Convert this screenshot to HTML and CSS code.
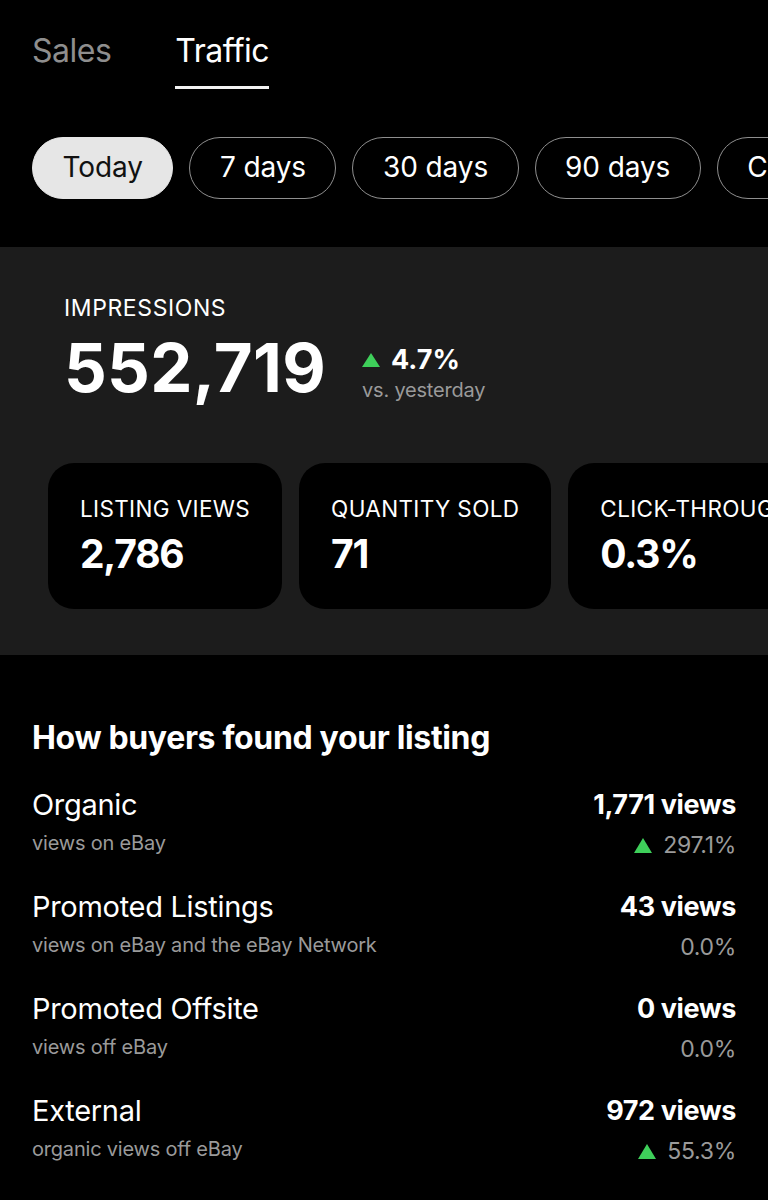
FILE: index.html
```html
<!DOCTYPE html>
<html lang="en">
<head>
<meta charset="utf-8">
<title>Traffic</title>
<link rel="stylesheet" href="styles.css">
</head>
<body>
<nav class="tabs">
  <div class="tab">Sales</div>
  <div class="tab tab-active">Traffic</div>
</nav>

<div class="pills">
  <div class="pill pill-active">Today</div>
  <div class="pill">7 days</div>
  <div class="pill">30 days</div>
  <div class="pill">90 days</div>
  <div class="pill">Custom</div>
</div>

<section class="summary">
  <div class="impressions">
    <div class="label">IMPRESSIONS</div>
    <div class="imp-row">
      <div class="big">552,719</div>
      <div class="delta">
        <div class="delta-top"><span class="tri"></span><span class="delta-val">4.7%</span></div>
        <div class="delta-sub">vs. yesterday</div>
      </div>
    </div>
  </div>
  <div class="cards">
    <div class="card">
      <div class="card-label">LISTING VIEWS</div>
      <div class="card-value">2,786</div>
    </div>
    <div class="card">
      <div class="card-label">QUANTITY SOLD</div>
      <div class="card-value">71</div>
    </div>
    <div class="card">
      <div class="card-label">CLICK-THROUGH RATE</div>
      <div class="card-value">0.3%</div>
    </div>
  </div>
</section>

<section class="sources">
  <h2 class="heading">How buyers found your listing</h2>
  <div class="row">
    <div class="row-left">
      <div class="row-title">Organic</div>
      <div class="row-sub">views on eBay</div>
    </div>
    <div class="row-right">
      <div class="row-value">1,771 views</div>
      <div class="row-pct"><span class="tri tri-sm"></span>297.1%</div>
    </div>
  </div>
  <div class="row">
    <div class="row-left">
      <div class="row-title">Promoted Listings</div>
      <div class="row-sub">views on eBay and the eBay Network</div>
    </div>
    <div class="row-right">
      <div class="row-value">43 views</div>
      <div class="row-pct">0.0%</div>
    </div>
  </div>
  <div class="row">
    <div class="row-left">
      <div class="row-title">Promoted Offsite</div>
      <div class="row-sub">views off eBay</div>
    </div>
    <div class="row-right">
      <div class="row-value">0 views</div>
      <div class="row-pct">0.0%</div>
    </div>
  </div>
  <div class="row">
    <div class="row-left">
      <div class="row-title">External</div>
      <div class="row-sub">organic views off eBay</div>
    </div>
    <div class="row-right">
      <div class="row-value">972 views</div>
      <div class="row-pct"><span class="tri tri-sm"></span>55.3%</div>
    </div>
  </div>
</section>
</body>
</html>
```

FILE: styles.css
```css
* { box-sizing: border-box; }
html, body {
  margin: 0;
  padding: 0;
  background: #000;
  color: #fff;
  font-family: Inter, "Liberation Sans", sans-serif;
  width: 768px;
  height: 1200px;
  overflow: hidden;
}

.tabs {
  display: flex;
  gap: 64px;
  padding: 32px 32px 0;
}
.tab {
  font-size: 32px;
  line-height: 38px;
  color: #8e8e8e;
  padding-bottom: 16px;
  border-bottom: 3px solid transparent;
  letter-spacing: -0.5px;
}
.tab-active {
  color: #fff;
  border-bottom-color: #f2f2f2;
}

.pills {
  display: flex;
  gap: 16px;
  padding: 0 32px;
  margin-top: 48px;
  overflow: hidden;
  white-space: nowrap;
}
.pill {
  flex: none;
  height: 62px;
  padding: 0 29.5px;
  border: 1.5px solid #8f8f8f;
  border-radius: 31px;
  font-size: 28px;
  line-height: 59px;
  color: #fff;
  letter-spacing: -0.1px;
}
.pill-active {
  background: #e6e6e6;
  border-color: #e6e6e6;
  color: #111;
}

.summary {
  margin-top: 48px;
  background: #1c1c1c;
  height: 408px;
  padding: 47px 0 0 48px;
  overflow: hidden;
}
.impressions {
  padding-left: 16px;
}
.label {
  font-size: 23px;
  line-height: 28px;
  letter-spacing: 0.6px;
}
.imp-row {
  display: flex;
  align-items: flex-start;
  gap: 36px;
  margin-top: 10px;
}
.big {
  font-size: 67px;
  line-height: 72px;
  font-weight: 700;
  letter-spacing: 0.3px;
}
.delta {
  display: flex;
  flex-direction: column;
  margin-top: 12px;
}
.delta-top {
  display: flex;
  align-items: center;
  gap: 11px;
}
.tri {
  display: inline-block;
  flex: none;
  width: 0;
  height: 0;
  border-left: 9px solid transparent;
  border-right: 9px solid transparent;
  border-bottom: 14px solid #3ecf5a;
}
.delta-val {
  font-size: 27px;
  line-height: 32px;
  font-weight: 700;
}
.delta-sub {
  font-size: 20px;
  line-height: 24px;
  color: #9a9a9a;
  margin-top: 2px;
  letter-spacing: -0.2px;
}

.cards {
  display: flex;
  gap: 17px;
  margin-top: 59px;
  white-space: nowrap;
}
.card {
  flex: none;
  background: #000;
  border-radius: 26px;
  height: 146px;
  padding: 32px 32px 0 32px;
}
.card-label {
  font-size: 22.5px;
  line-height: 28px;
  letter-spacing: 0.35px;
}
.card-value {
  font-size: 39px;
  line-height: 44px;
  font-weight: 700;
  margin-top: 9px;
  letter-spacing: -1.2px;
}

.sources {
  padding: 63px 32px 0;
}
.heading {
  margin: 0 0 29px;
  font-size: 32px;
  line-height: 40px;
  font-weight: 700;
  letter-spacing: -0.35px;
}
.row {
  display: flex;
  justify-content: space-between;
  align-items: flex-start;
  height: 102px;
}
.row-title {
  font-size: 29px;
  line-height: 36px;
  letter-spacing: -0.3px;
}
.row-sub {
  font-size: 20px;
  line-height: 24px;
  color: #9a9a9a;
  margin-top: 8px;
  letter-spacing: -0.2px;
}
.row-right {
  display: flex;
  flex-direction: column;
  align-items: flex-end;
}
.row-value {
  font-size: 27px;
  line-height: 36px;
  font-weight: 700;
  letter-spacing: -0.4px;
}
.row-pct {
  display: flex;
  align-items: center;
  gap: 11px;
  font-size: 23px;
  line-height: 28px;
  color: #9a9a9a;
  margin-top: 8px;
  letter-spacing: -0.3px;
}
.tri-sm {
  border-left-width: 9.5px;
  border-right-width: 9.5px;
  border-bottom-width: 15px;
}
```
